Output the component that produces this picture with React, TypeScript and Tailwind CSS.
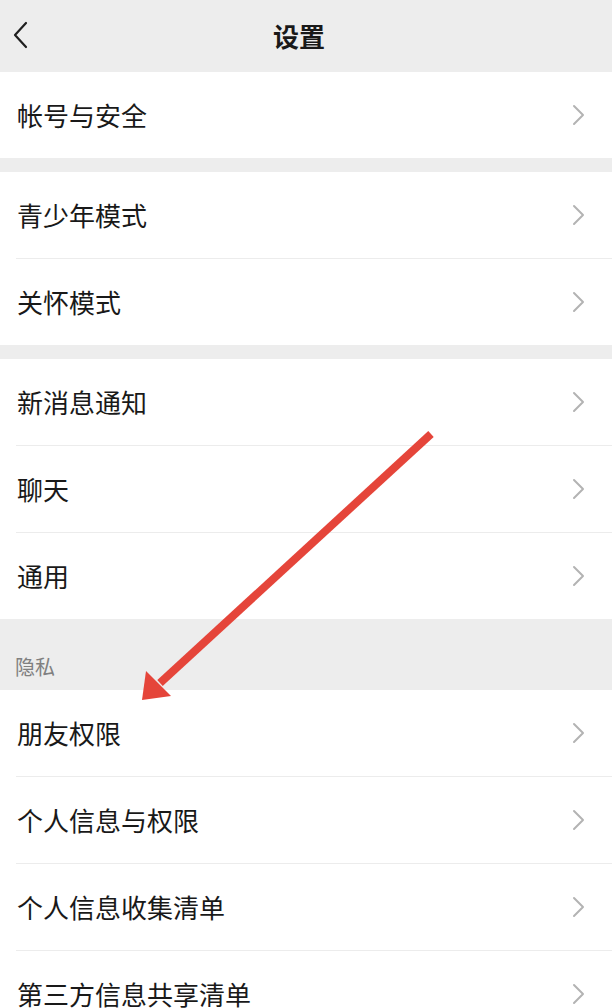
import React from 'react'

const font = { fontFamily: '"Noto Sans CJK SC", "Noto Sans", sans-serif' }

const groups: string[][] = [
  ['帐号与安全'],
  ['青少年模式', '关怀模式'],
  ['新消息通知', '聊天', '通用'],
]

const privacy = ['朋友权限', '个人信息与权限', '个人信息收集清单', '第三方信息共享清单']

function Chevron() {
  return (
    <svg width="14" height="22" viewBox="0 0 14 22" fill="none" className="shrink-0">
      <path d="M3 2 L12 11 L3 20" stroke="#b3b3b3" strokeWidth="2" strokeLinecap="round" strokeLinejoin="round" />
    </svg>
  )
}

function Row({ label, last }: { label: string; last: boolean }) {
  return (
    <div className="bg-white pl-4">
      <div className={`flex items-center justify-between pr-[27px] ${last ? 'h-[86px]' : 'h-[87px] border-b border-[#ececec]'}`}>
        <span className="pl-px text-[26px] leading-none text-[#191919]">{label}</span>
        <Chevron />
      </div>
    </div>
  )
}

function Group({ items }: { items: string[] }) {
  return (
    <div className="flex flex-col">
      {items.map((label, i) => (
        <Row key={label} label={label} last={i === items.length - 1} />
      ))}
    </div>
  )
}

export default function App() {
  return (
    <div className="relative h-[1008px] w-[612px] overflow-hidden bg-[#ededed]" style={font}>
      {/* header */}
      <div className="relative flex h-[72px] items-center justify-center">
        <svg className="absolute left-[12px] top-[21px]" width="16" height="28" viewBox="0 0 16 28" fill="none">
          <path d="M14 2 L3 14 L14 26" stroke="#1f1f1f" strokeWidth="2.2" strokeLinecap="round" strokeLinejoin="round" />
        </svg>
        <span className="mr-[14px] text-[26px] font-semibold leading-none text-[#191919]">设置</span>
      </div>

      <div className="flex flex-col gap-[14px]">
        {groups.map((g) => (
          <Group key={g[0]} items={g} />
        ))}
      </div>

      <div className="flex h-[71px] items-end pb-[13px] pl-[15px]">
        <span className="text-[20px] leading-none text-[#808080]">隐私</span>
      </div>
      <Group items={privacy} />

      {/* red annotation arrow */}
      <svg className="pointer-events-none absolute left-0 top-0" width="612" height="1008" viewBox="0 0 612 1008">
        <line x1="431" y1="434" x2="160" y2="683" stroke="#e5453a" strokeWidth="8" />
        <polygon points="142,700 146,671 171,696" fill="#e5453a" />
      </svg>
    </div>
  )
}
